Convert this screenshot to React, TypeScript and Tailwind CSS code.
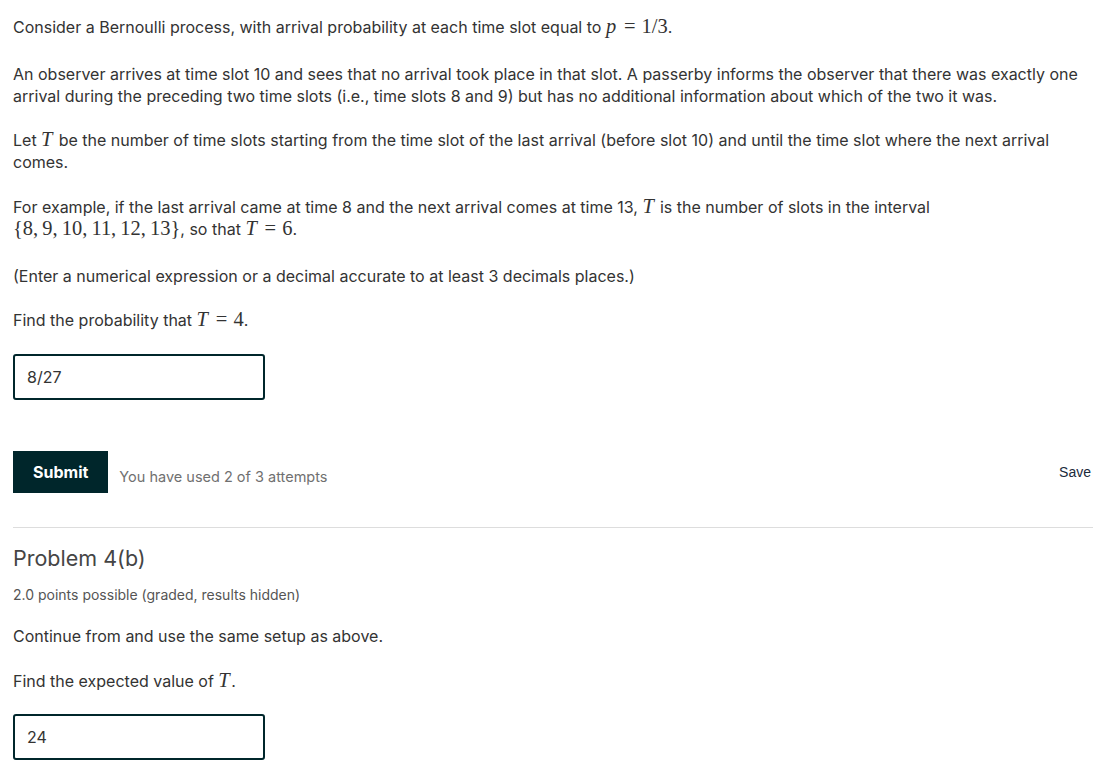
import React from "react";

function M({ children }: { children: React.ReactNode }) {
  return (
    <span className="whitespace-nowrap font-['Liberation_Serif',serif] text-[1.28em] leading-none">
      {children}
    </span>
  );
}

function I({ children }: { children: React.ReactNode }) {
  return <i className="pr-[0.08em]">{children}</i>;
}

function Eq() {
  return <span className="mx-[0.3em]">=</span>;
}

function AnswerBox({ value }: { value: string }) {
  return (
    <div className="flex h-[46px] w-[252px] items-center rounded-[3px] border-2 border-[#00262b] px-3 text-[16px] text-[#333]">
      {value}
    </div>
  );
}

export default function App() {
  return (
    <div className="min-h-screen bg-white px-[13px] pt-[16px] font-['Inter',sans-serif] text-[16px] leading-[22px] text-[#333]">
      <div className="w-[1080px]">
        <p className="mb-[25px]">
          Consider a Bernoulli process, with arrival probability at each time slot equal to{" "}
          <M>
            <I>p</I>
            <Eq />
            1/3
          </M>
          .
        </p>
        <p className="mb-[22px]">
          An observer arrives at time slot 10 and sees that no arrival took place in that slot. A
          passerby informs the observer that there was exactly one arrival during the preceding two
          time slots (i.e., time slots 8 and 9) but has no additional information about which of the
          two it was.
        </p>
        <p className="mb-[23px]">
          Let{" "}
          <M>
            <I>T</I>
          </M>{" "}
          be the number of time slots starting from the time slot of the last arrival (before slot
          10) and until the time slot where the next arrival comes.
        </p>
        <p className="mb-[25px]">
          For example, if the last arrival came at time 8 and the next arrival comes at time 13,{" "}
          <M>
            <I>T</I>
          </M>{" "}
          is the number of slots in the interval{" "}
          <M>{"{8,\u20099,\u200910,\u200911,\u200912,\u200913}"}</M>, so that{" "}
          <M>
            <I>T</I>
            <Eq />6
          </M>
          .
        </p>
        <p className="mb-[22px]">
          (Enter a numerical expression or a decimal accurate to at least 3 decimals places.)
        </p>
        <p className="mb-[23px]">
          Find the probability that{" "}
          <M>
            <I>T</I>
            <Eq />4
          </M>
          .
        </p>
        <AnswerBox value="8/27" />

        <div className="mt-[51px] flex items-center justify-between">
          <div className="flex items-center">
            <button className="h-[42px] bg-[#00262b] px-[20px] text-[16px] font-bold text-white">
              Submit
            </button>
            <span className="ml-[11px] mt-[9px] text-[14.5px] text-[#707070]">
              You have used 2 of 3 attempts
            </span>
          </div>
          <span className="mr-[2px] font-['Liberation_Sans',sans-serif] text-[14px] text-[#1b2a3b]">
            Save
          </span>
        </div>

        <div className="mt-[34px] border-t border-[#dddddd]" />

        <h3 className="mt-[16px] text-[21.5px] leading-[28px] text-[#454545]">Problem 4(b)</h3>
        <div className="mt-[14px] text-[14px] leading-[18px] text-[#555]">
          2.0 points possible (graded, results hidden)
        </div>
        <p className="mt-[21px]">Continue from and use the same setup as above.</p>
        <p className="mt-[23px]">
          Find the expected value of{" "}
          <M>
            <I>T</I>
          </M>
          .
        </p>
        <div className="mt-[22px]">
          <AnswerBox value="24" />
        </div>
      </div>
    </div>
  );
}
